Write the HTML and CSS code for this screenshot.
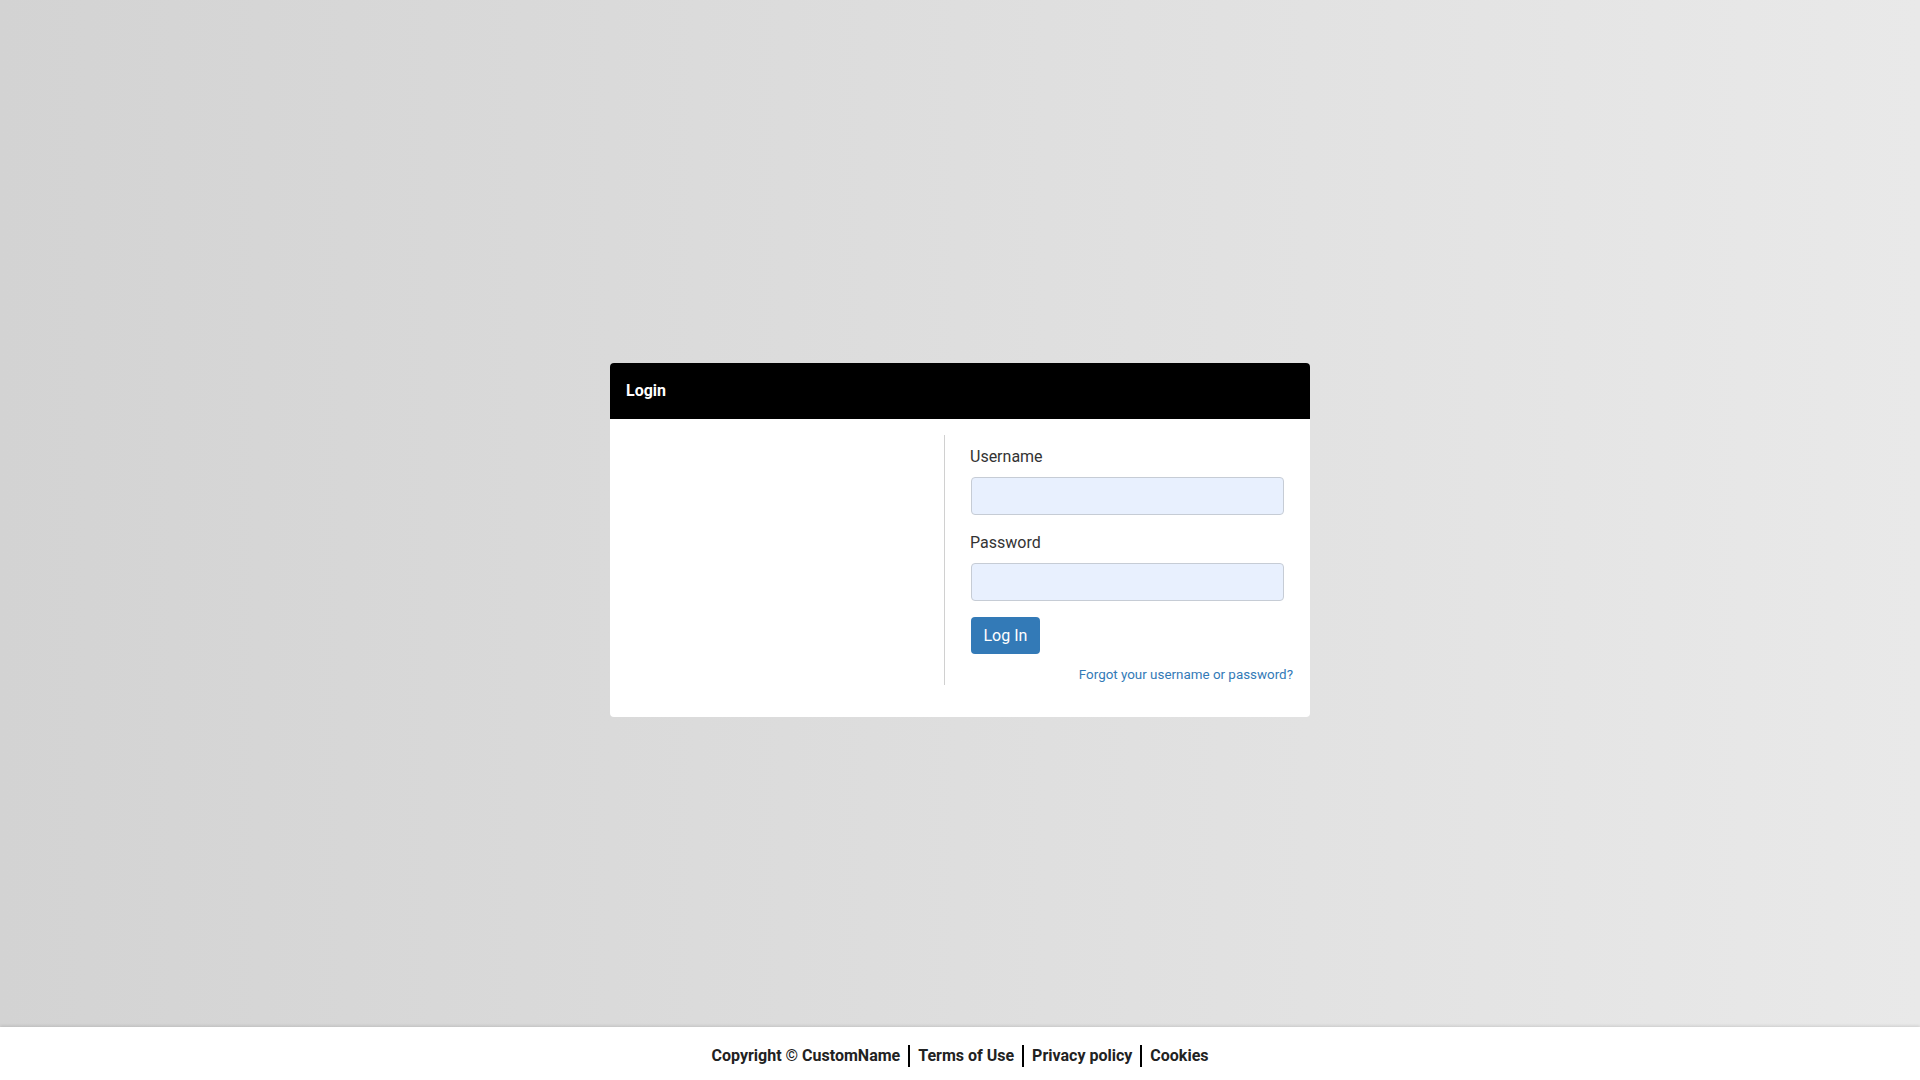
FILE: index.html
```html
<!DOCTYPE html>
<html lang="en">
<head>
<meta charset="utf-8">
<title>Login</title>
<link rel="stylesheet" href="styles.css">
</head>
<body>
<div class="page">
  <main class="main">
    <section class="card">
      <header class="card-header">Login</header>
      <div class="card-body">
        <div class="col-left"></div>
        <form class="col-right">
          <label class="label" for="username">Username</label>
          <input class="input" id="username" type="text">
          <label class="label label-2" for="password">Password</label>
          <input class="input" id="password" type="password">
          <button class="btn" type="button">Log In</button>
          <div class="forgot"><a href="#">Forgot your username or password?</a></div>
        </form>
      </div>
    </section>
  </main>
  <footer class="footer">
    <span class="foot-item">Copyright © CustomName</span>
    <span class="foot-item sep">Terms of Use</span>
    <span class="foot-item sep">Privacy policy</span>
    <span class="foot-item sep">Cookies</span>
  </footer>
</div>
</body>
</html>
```

FILE: styles.css
```css
* { box-sizing: border-box; }
html, body { margin: 0; padding: 0; }
body {
  font-family: Roboto, "Liberation Sans", Arial, sans-serif;
  color: #333;
  background: linear-gradient(to right, #d3d3d3 0%, #dedede 50%, #e9e9e9 100%);
  height: 100vh;
  overflow: hidden;
}
.page {
  display: flex;
  flex-direction: column;
  height: 100vh;
}
.main {
  flex: 1;
  display: flex;
  align-items: center;
  justify-content: center;
  padding-top: 53px;
}
.card {
  width: 700px;
  background: #fff;
  border-radius: 4px;
  overflow: hidden;
}
.card-header {
  height: 56px;
  background: #000;
  color: #fff;
  font-weight: 700;
  font-size: 16px;
  display: flex;
  align-items: center;
  padding: 0 16px;
  padding-bottom: 1px;
}
.card-body {
  display: grid;
  grid-template-columns: 319px 1fr;
  padding: 16px 17px 32px 16px;
}
.col-left {
  border-right: 1px solid #d0d0d0;
}
.col-right {
  display: flex;
  flex-direction: column;
  align-items: flex-start;
  padding: 12px 0 1px 26px;
  margin: 0;
}
.label {
  font-size: 16px;
  line-height: 20px;
  color: #333;
  margin-left: -1px;
  margin-bottom: 10px;
}
.label-2 { margin-top: 18px; }
.input {
  width: 313px;
  height: 38px;
  background: #e8f0fe;
  border: 1px solid #c6ccd5;
  border-radius: 4px;
  padding: 0 10px;
  font-family: inherit;
  font-size: 15px;
  outline: none;
}
.btn {
  margin-top: 16px;
  height: 37px;
  padding: 0 12.5px;
  background: #337ab7;
  color: #fff;
  border: none;
  border-radius: 4px;
  font-family: inherit;
  font-size: 16px;
  cursor: pointer;
}
.forgot {
  align-self: stretch;
  text-align: right;
  margin-top: 12px;
  font-size: 13.4px;
  line-height: 18px;
}
.forgot a {
  color: #337ab7;
  text-decoration: none;
}
.footer {
  height: 53px;
  flex: 0 0 53px;
  background: #fff;
  box-shadow: 0 -1px 3px rgba(0, 0, 0, 0.12);
  display: flex;
  align-items: center;
  justify-content: center;
  padding-top: 4px;
}
.foot-item {
  font-weight: 700;
  font-size: 16px;
  line-height: 22px;
  color: #222;
}
.sep {
  border-left: 2px solid #000;
  padding-left: 8px;
  margin-left: 8px;
}
```
